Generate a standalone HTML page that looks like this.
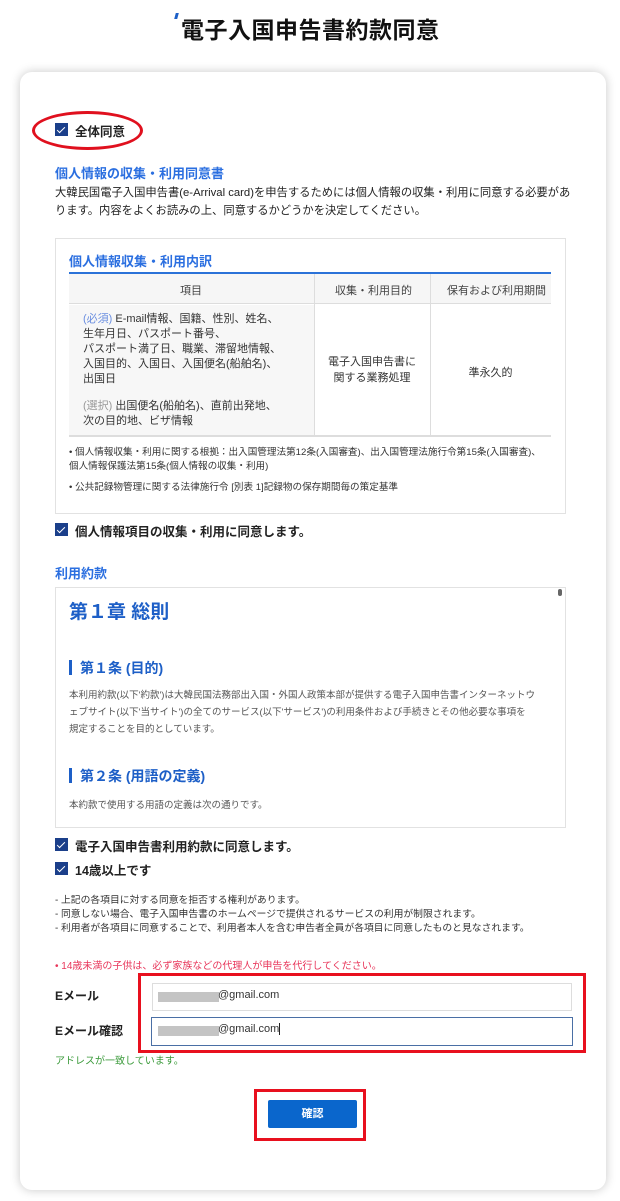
<!DOCTYPE html>
<html><head><meta charset="utf-8"><style>
*{margin:0;padding:0;box-sizing:border-box}
body{width:620px;height:1201px;background:#fff;position:relative;font-family:"Liberation Sans","Noto Sans CJK JP",sans-serif;color:#222;overflow:hidden}
.a{position:absolute;white-space:nowrap}
.card{position:absolute;left:20px;top:72px;width:586px;height:1118px;background:#fff;border-radius:12px;box-shadow:0 0 10px rgba(0,0,0,.22)}
.cb{position:absolute;width:13px;height:13px;background:#1b3f8a}
.cb:after{content:"";position:absolute;left:4px;top:1.5px;width:3px;height:7px;border:solid #fff;border-width:0 1.6px 1.6px 0;transform:rotate(45deg)}
.blue{color:#2b6fe0;font-weight:bold;font-size:13px}
.lb{font-size:12.5px;font-weight:bold}
</style></head><body>
<div class="a" style="left:175px;top:13px;width:3px;height:6px;background:#1d5fc7;transform:skewX(-15deg)"></div>
<div class="a" style="left:181px;top:11px;font-size:23px;font-weight:bold;color:#111;letter-spacing:0.5px">電子入国申告書約款同意</div>
<div class="card"></div>
<div class="a" style="left:32px;top:111px;width:111px;height:39px;border:3.5px solid #e0101e;border-radius:50%"></div>
<div class="cb" style="left:55px;top:123px"></div>
<div class="a lb" style="left:75px;top:121px">全体同意</div>
<div class="a blue" style="left:55px;top:163px">個人情報の収集・利用同意書</div>
<div class="a" style="left:55px;top:184px;font-size:11.3px;line-height:18px">大韓民国電子入国申告書(e-Arrival card)を申告するためには個人情報の収集・利用に同意する必要があ<br>ります。内容をよくお読みの上、同意するかどうかを決定してください。</div>
<div class="a" style="left:55px;top:238px;width:511px;height:276px;border:1px solid #e2e2e2"></div>
<div class="a blue" style="left:69px;top:251px">個人情報収集・利用内訳</div>
<div class="a" style="left:69px;top:272px;width:482px;height:2px;background:#2b72d8"></div>
<div class="a" style="left:69px;top:274px;width:482px;height:30px;background:#f6f6f6;border-bottom:1.5px solid #ddd"></div>
<div class="a" style="left:69px;top:305px;width:245px;height:131px;background:#f7f7f7"></div>
<div class="a" style="left:314px;top:274px;width:1px;height:162px;background:#ddd"></div>
<div class="a" style="left:430px;top:274px;width:1px;height:162px;background:#ddd"></div>
<div class="a" style="left:69px;top:435px;width:482px;height:1.5px;background:#ddd"></div>
<div class="a" style="left:180px;top:282px;font-size:11px;color:#444">項目</div>
<div class="a" style="left:335px;top:282px;font-size:11px;color:#444">収集・利用目的</div>
<div class="a" style="left:447px;top:282px;font-size:11px;color:#444">保有および利用期間</div>
<div class="a" style="left:83px;top:312px;font-size:11px;line-height:15px;color:#333"><span style="color:#6b8fe0">(必須)</span> E-mail情報、国籍、性別、姓名、<br>生年月日、パスポート番号、<br>パスポート満了日、職業、滞留地情報、<br>入国目的、入国日、入国便名(船舶名)、<br>出国日<br><span style="display:block;height:12px"></span><span style="color:#999">(選択)</span> 出国便名(船舶名)、直前出発地、<br>次の目的地、ビザ情報</div>
<div class="a" style="left:314px;top:354px;width:116px;text-align:center;font-size:11px;line-height:16px;color:#333">電子入国申告書に<br>関する業務処理</div>
<div class="a" style="left:430px;top:364px;width:121px;text-align:center;font-size:11px;color:#333">準永久的</div>
<div class="a" style="left:69px;top:446px;font-size:9.6px;line-height:14px;color:#333">• 個人情報収集・利用に関する根拠：出入国管理法第12条(入国審査)、出入国管理法施行令第15条(入国審査)、<br>個人情報保護法第15条(個人情報の収集・利用)</div>
<div class="a" style="left:69px;top:479px;font-size:9.6px;color:#333">• 公共記録物管理に関する法律施行令 [別表 1]記録物の保存期間毎の策定基準</div>
<div class="cb" style="left:55px;top:523px"></div>
<div class="a lb" style="left:75px;top:521px">個人情報項目の収集・利用に同意します。</div>
<div class="a blue" style="left:55px;top:563px">利用約款</div>
<div class="a" style="left:55px;top:587px;width:511px;height:241px;border:1px solid #e2e2e2"></div>
<div class="a" style="left:558px;top:589px;width:4px;height:7px;background:#666;border-radius:2px"></div>
<div class="a" style="left:69px;top:597px;font-size:19px;font-weight:bold;color:#1d5fc7">第１章 総則</div>
<div class="a" style="left:69px;top:660px;width:3px;height:15px;background:#1d5fc7"></div>
<div class="a" style="left:80px;top:658px;font-size:14px;font-weight:bold;color:#1d5fc7">第１条 (目的)</div>
<div class="a" style="left:69px;top:687px;font-size:9.5px;line-height:17px;color:#555">本利用約款(以下'約款')は大韓民国法務部出入国・外国人政策本部が提供する電子入国申告書インターネットウ<br>ェブサイト(以下'当サイト')の全てのサービス(以下'サービス')の利用条件および手続きとその他必要な事項を<br>規定することを目的としています。</div>
<div class="a" style="left:69px;top:768px;width:3px;height:15px;background:#1d5fc7"></div>
<div class="a" style="left:80px;top:766px;font-size:14px;font-weight:bold;color:#1d5fc7">第２条 (用語の定義)</div>
<div class="a" style="left:69px;top:797px;font-size:9.5px;color:#555">本約款で使用する用語の定義は次の通りです。</div>
<div class="cb" style="left:55px;top:838px"></div>
<div class="a lb" style="left:75px;top:836px">電子入国申告書利用約款に同意します。</div>
<div class="cb" style="left:55px;top:862px"></div>
<div class="a lb" style="left:75px;top:860px">14歳以上です</div>
<div class="a" style="left:55px;top:894px;font-size:9.8px;line-height:14px;color:#333">- 上記の各項目に対する同意を拒否する権利があります。<br>- 同意しない場合、電子入国申告書のホームページで提供されるサービスの利用が制限されます。<br>- 利用者が各項目に同意することで、利用者本人を含む申告者全員が各項目に同意したものと見なされます。</div>
<div class="a" style="left:55px;top:957px;font-size:10px;color:#e8365a">• 14歳未満の子供は、必ず家族などの代理人が申告を代行してください。</div>
<div class="a" style="left:138px;top:973px;width:448px;height:80px;border:3.5px solid #e8101e"></div>
<div class="a" style="left:55px;top:987px;font-size:12px;font-weight:bold">Eメール</div>
<div class="a" style="left:55px;top:1022px;font-size:12px;font-weight:bold">Eメール確認</div>
<div class="a" style="left:152px;top:983px;width:420px;height:28px;border:1px solid #ddd"></div>
<div class="a" style="left:151px;top:1017px;width:422px;height:29px;border:1px solid #4a6fa5"></div>
<div class="a" style="left:158px;top:992px;width:61px;height:10px;background:#c4c4c4"></div>
<div class="a" style="left:218px;top:989px;font-size:11px;color:#333">@gmail.com</div>
<div class="a" style="left:158px;top:1026px;width:61px;height:10px;background:#c4c4c4"></div>
<div class="a" style="left:218px;top:1023px;font-size:11px;color:#333">@gmail.com<span style="display:inline-block;width:1px;height:12px;background:#222;vertical-align:middle"></span></div>
<div class="a" style="left:55px;top:1052px;font-size:10px;color:#3a9a3a">アドレスが一致しています。</div>
<div class="a" style="left:254px;top:1089px;width:112px;height:52px;border:3.5px solid #e8101e"></div>
<div class="a" style="left:268px;top:1100px;width:89px;height:28px;background:#0a66cc;border-radius:2px;color:#fff;font-size:11px;font-weight:bold;text-align:center;line-height:28px">確認</div>
</body></html>
